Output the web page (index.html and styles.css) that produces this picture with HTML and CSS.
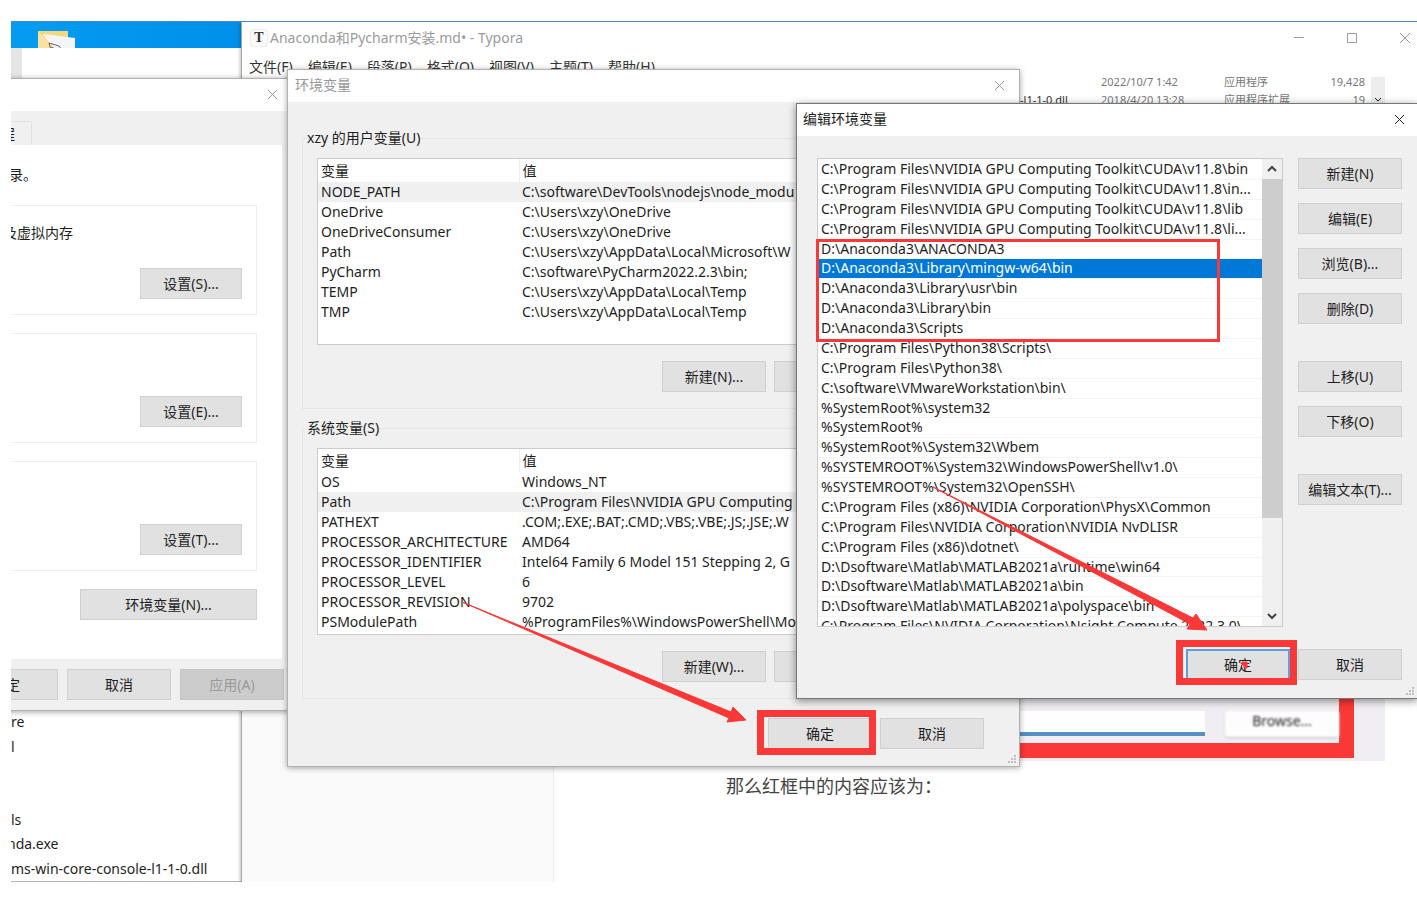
FILE: index.html
```html
<!DOCTYPE html>
<html lang="zh-CN">
<head>
<meta charset="utf-8">
<title>环境变量</title>
<link rel="stylesheet" href="styles.css">
</head>
<body>
<main class="desktop">
  <svg class="folder" width="38" height="20" viewBox="0 0 38 20" aria-hidden="true">
    <path class="folder-back" d="M0 1H30V20H0Z"/>
    <path class="folder-paper" d="M5 4L37 8V20H14Z"/>
    <path class="folder-front" d="M0 2L14 14V20H0Z"/>
    <path class="folder-lines" d="M11 13L13 20M11 13L21 16L24 20M13 17L20 20"/>
  </svg>

  <section class="explorer">
    <ul class="files">
      <li>re</li>
      <li>l</li>
      <li></li>
      <li></li>
      <li>ls</li>
      <li class="cut">nda.exe</li>
      <li>ms-win-core-console-l1-1-0.dll</li>
    </ul>
  </section>

  <section class="typora">
    <header class="typora-bar">
      <span class="logo">T</span>
      <h1 class="typora-title">Anaconda和Pycharm安装.md• - Typora</h1>
      <div class="caption">
        <button type="button" aria-label="最小化"><svg width="12" height="12"><path d="M1 5.500H11" /></svg></button>
        <button type="button" aria-label="最大化"><svg width="12" height="12"><path d="M1.500 1.500H10.500V10.500H1.500Z" /></svg></button>
        <button type="button" aria-label="关闭"><svg width="12" height="12"><path d="M1 1L11 11M11 1L1 11" /></svg></button>
      </div>
    </header>
    <nav class="menu">
      <a href="#">文件(F)</a><a href="#">编辑(E)</a><a href="#">段落(P)</a><a href="#">格式(O)</a><a href="#">视图(V)</a><a href="#">主题(T)</a><a href="#">帮助(H)</a>
    </nav>
    <div class="typora-body">
      <aside class="sidebar"></aside>
      <article class="document">
        <div class="shot-top">
          <table class="details">
            <tr><td class="name"></td><td class="date">2022/10/7 1:42</td><td>应用程序</td><td class="size">19,428</td></tr>
            <tr><td class="name">-l1-1-0.dll</td><td>2018/4/20 13:28</td><td>应用程序扩展</td><td class="size">19</td></tr>
          </table>
          <div class="shot-scroll"><svg width="8" height="6"><path d="M1 1L4 4L7 1" /></svg></div>
        </div>
        <div class="shot-bottom">
          <div class="shot-field"></div>
          <div class="shot-browse">Browse...</div>
        </div>
        <p class="caption-text">那么红框中的内容应该为：</p>
      </article>
    </div>
  </section>

  <section class="window props">
    <header class="titlebar">
      <button class="close" type="button" aria-label="关闭"><svg width="11" height="11"><path d="M1 1L10 10M10 1L1 10" /></svg></button>
    </header>
    <div class="tabs"><span class="tab">程</span></div>
    <div class="page">
      <p class="note">录。</p>
      <div class="box"><p>及虚拟内存</p><button class="btn" type="button">设置(S)...</button></div>
      <div class="box"><button class="btn" type="button">设置(E)...</button></div>
      <div class="box"><button class="btn" type="button">设置(T)...</button></div>
      <button class="btn wide" type="button">环境变量(N)...</button>
    </div>
    <footer class="actions">
      <button class="btn" type="button">确定</button>
      <button class="btn" type="button">取消</button>
      <button class="btn" type="button" disabled>应用(A)</button>
    </footer>
  </section>

  <section class="window env">
    <header class="titlebar">
      <h2>环境变量</h2>
      <button class="close" type="button" aria-label="关闭"><svg width="11" height="11"><path d="M1 1L10 10M10 1L1 10" /></svg></button>
    </header>
    <div class="env-body">
      <fieldset class="group">
        <legend>xzy 的用户变量(U)</legend>
        <div class="list">
          <table class="vars">
            <thead><tr><th>变量</th><th>值</th></tr></thead>
            <tbody>
              <tr class="current"><td>NODE_PATH</td><td>C:\software\DevTools\nodejs\node_modu</td></tr>
              <tr><td>OneDrive</td><td>C:\Users\xzy\OneDrive</td></tr>
              <tr><td>OneDriveConsumer</td><td>C:\Users\xzy\OneDrive</td></tr>
              <tr><td>Path</td><td>C:\Users\xzy\AppData\Local\Microsoft\W</td></tr>
              <tr><td>PyCharm</td><td>C:\software\PyCharm2022.2.3\bin;</td></tr>
              <tr><td>TEMP</td><td>C:\Users\xzy\AppData\Local\Temp</td></tr>
              <tr><td>TMP</td><td>C:\Users\xzy\AppData\Local\Temp</td></tr>
            </tbody>
          </table>
        </div>
        <div class="row"><button class="btn" type="button">新建(N)...</button><button class="btn" type="button" aria-label="编辑"></button><button class="btn" type="button" aria-label="删除"></button></div>
      </fieldset>
      <fieldset class="group">
        <legend>系统变量(S)</legend>
        <div class="list">
          <table class="vars">
            <thead><tr><th>变量</th><th>值</th></tr></thead>
            <tbody>
              <tr><td>OS</td><td>Windows_NT</td></tr>
              <tr class="current"><td>Path</td><td>C:\Program Files\NVIDIA GPU Computing</td></tr>
              <tr><td>PATHEXT</td><td>.COM;.EXE;.BAT;.CMD;.VBS;.VBE;.JS;.JSE;.W</td></tr>
              <tr><td>PROCESSOR_ARCHITECTURE</td><td>AMD64</td></tr>
              <tr><td>PROCESSOR_IDENTIFIER</td><td>Intel64 Family 6 Model 151 Stepping 2, G</td></tr>
              <tr><td>PROCESSOR_LEVEL</td><td>6</td></tr>
              <tr><td>PROCESSOR_REVISION</td><td>9702</td></tr>
              <tr><td>PSModulePath</td><td>%ProgramFiles%\WindowsPowerShell\Mo</td></tr>
            </tbody>
          </table>
        </div>
        <div class="row"><button class="btn" type="button">新建(W)...</button><button class="btn" type="button" aria-label="编辑"></button><button class="btn" type="button" aria-label="删除"></button></div>
      </fieldset>
      <footer class="row confirm"><button class="btn" type="button">确定</button><button class="btn" type="button">取消</button></footer>
    </div>
    <svg class="grip" width="10" height="10" aria-hidden="true"><path d="M7 0h2v2h-2zM4 3h2v2h-2zM7 3h2v2h-2zM1 6h2v2h-2zM4 6h2v2h-2zM7 6h2v2h-2z"/></svg>
  </section>

  <section class="window edit">
    <header class="titlebar">
      <h2>编辑环境变量</h2>
      <button class="close" type="button" aria-label="关闭"><svg width="11" height="11"><path d="M1 1L10 10M10 1L1 10" /></svg></button>
    </header>
    <div class="edit-body">
      <div class="list paths-list">
        <ul class="paths">
          <li>C:\Program Files\NVIDIA GPU Computing Toolkit\CUDA\v11.8\bin</li>
          <li>C:\Program Files\NVIDIA GPU Computing Toolkit\CUDA\v11.8\in...</li>
          <li>C:\Program Files\NVIDIA GPU Computing Toolkit\CUDA\v11.8\lib</li>
          <li>C:\Program Files\NVIDIA GPU Computing Toolkit\CUDA\v11.8\li...</li>
          <li>D:\Anaconda3\ANACONDA3</li>
          <li class="selected">D:\Anaconda3\Library\mingw-w64\bin</li>
          <li>D:\Anaconda3\Library\usr\bin</li>
          <li>D:\Anaconda3\Library\bin</li>
          <li>D:\Anaconda3\Scripts</li>
          <li>C:\Program Files\Python38\Scripts\</li>
          <li>C:\Program Files\Python38\</li>
          <li>C:\software\VMwareWorkstation\bin\</li>
          <li>%SystemRoot%\system32</li>
          <li>%SystemRoot%</li>
          <li>%SystemRoot%\System32\Wbem</li>
          <li>%SYSTEMROOT%\System32\WindowsPowerShell\v1.0\</li>
          <li>%SYSTEMROOT%\System32\OpenSSH\</li>
          <li>C:\Program Files (x86)\NVIDIA Corporation\PhysX\Common</li>
          <li>C:\Program Files\NVIDIA Corporation\NVIDIA NvDLISR</li>
          <li>C:\Program Files (x86)\dotnet\</li>
          <li>D:\Dsoftware\Matlab\MATLAB2021a\runtime\win64</li>
          <li>D:\Dsoftware\Matlab\MATLAB2021a\bin</li>
          <li>D:\Dsoftware\Matlab\MATLAB2021a\polyspace\bin</li>
          <li>C:\Program Files\NVIDIA Corporation\Nsight Compute 2022.3.0\</li>
        </ul>
        <div class="scrollbar">
          <svg width="10" height="7"><path d="M1 6L5 2L9 6" /></svg>
          <span class="thumb"></span>
          <svg width="10" height="7"><path d="M1 1L5 5L9 1" /></svg>
        </div>
      </div>
      <div class="side">
        <button class="btn" type="button">新建(N)</button>
        <button class="btn" type="button">编辑(E)</button>
        <button class="btn" type="button">浏览(B)...</button>
        <button class="btn" type="button">删除(D)</button>
        <button class="btn apart" type="button">上移(U)</button>
        <button class="btn" type="button">下移(O)</button>
        <button class="btn apart" type="button">编辑文本(T)...</button>
      </div>
    </div>
    <footer class="row edit-confirm"><button class="btn default" type="button">确定</button><button class="btn" type="button">取消</button></footer>
    <svg class="grip" width="10" height="10" aria-hidden="true"><path d="M7 0h2v2h-2zM4 3h2v2h-2zM7 3h2v2h-2zM1 6h2v2h-2zM4 6h2v2h-2zM7 6h2v2h-2z"/></svg>
  </section>

  <svg class="marks" aria-hidden="true">
    <g transform="translate(-11 -21)">
      <rect x="817.500" y="240.500" width="401" height="100" stroke-width="3"/>
      <rect x="760.500" y="713.500" width="112" height="38" stroke-width="7"/>
      <rect x="1179.500" y="643.500" width="114" height="38" stroke-width="7"/>
      <path d="M462 602L731 712L733 707L746 720L727 722L729 718Z"/>
      <path d="M933 487L1193 618L1196 614L1207 630L1187 629L1190 624Z"/>
      <path d="M1242 662h5v6h-3v-3h-2z"/>
    </g>
  </svg>
</main>
</body>
</html>
```

FILE: styles.css
```css
* { box-sizing: border-box; }

body {
  margin: 0;
  background: #fff;
  color: #1e1e1e;
  font: 14px/20px "Noto Sans", "Noto Sans CJK SC", sans-serif;
}

h1, h2, p, ul { margin: 0; padding: 0; font-size: 14px; font-weight: 400; }
ul { list-style: none; }
button { font: inherit; color: inherit; padding: 0; border: 0; background: none; }
svg path { fill: none; stroke: currentColor; }

.desktop {
  position: relative;
  height: calc(100vh - 54px);
  min-height: 861px;
  margin: 21px 0 0 11px;
  overflow: hidden;
  background: #fff linear-gradient(90deg, #049cf0, #0090ea 230px) no-repeat 0 0 / 231px 27px;
  border-top: 1px solid #4a86c8;
}

.folder { position: absolute; left: 27px; top: 8px; }
.folder path { stroke: none; }
.folder .folder-back { fill: #f5d77c; }
.folder .folder-paper { fill: #f3f5f8; }
.folder .folder-front { fill: #f9e2a0; }
.folder .folder-lines { stroke: #666; }

/* file explorer */
.explorer {
  position: absolute;
  left: 0;
  top: 26px;
  bottom: 0;
  width: 231px;
  display: flex;
  align-items: flex-end;
  background: linear-gradient(#e6e6e6, #e6e6e6) no-repeat 0 0 / 11px 40px, #fff;
  border-bottom: 1px solid #b4b4b4;
}
.files { height: 171px; display: grid; grid-auto-rows: 1fr; align-items: center; }
.files .cut { margin-left: -4px; }

/* Typora */
.typora {
  position: absolute;
  left: 230px;
  right: 0;
  top: 0;
  bottom: 0;
  display: flex;
  flex-direction: column;
  background: #fff;
  border-left: 1px solid #a8a8a8;
  box-shadow: -1px 1px 3px rgba(0, 0, 0, .25);
}
.typora-bar { display: flex; align-items: center; height: 32px; padding-left: 9px; color: #9b9b9b; }
.logo {
  width: 16px;
  height: 16px;
  margin-right: 3px;
  border-radius: 3px;
  background: #fafafa;
  box-shadow: 0 0 2px #bbb;
  color: #333;
  font: 700 14px/16px "Liberation Serif", serif;
  text-align: center;
}
.caption { display: flex; gap: 41px; margin-left: auto; padding-right: 6px; }
.caption button { display: flex; }
.menu { display: flex; gap: 15px; padding: 3px 7px 0; color: #333; }
.menu a { color: inherit; text-decoration: none; }
.typora-body { flex: 1; display: flex; }
.sidebar { width: 312px; background: #fafafa; border-right: 1px solid #eee; }
.document { flex: 1; display: flex; flex-direction: column; padding-right: 32px; }
.shot-top { display: flex; align-items: flex-start; height: 40px; margin-left: 464px; overflow: hidden; }
.details {
  flex: 1;
  table-layout: fixed;
  width: 100%;
  margin-top: -4px;
  border-collapse: collapse;
  font-size: 11px;
  line-height: 18px;
  color: #777;
}
.details td { padding: 0; height: 18px; white-space: nowrap; }
.details .name { width: 83px; padding-left: 2px; color: #333; }
.details .date { width: 123px; }
.details .size { width: 50px; text-align: right; }
.shot-scroll { width: 14px; height: 40px; margin-left: 6px; background: #ededed; padding: 20px 3px 0; line-height: 0; }
.shot-bottom {
  display: flex;
  align-items: flex-start;
  height: 64px;
  margin: 580px 0 0 464px;
  padding: 14px 0 0;
  background: linear-gradient(#fb3838, #fb3838) no-repeat 0 46px / 336px 15px,
    linear-gradient(#fb3838, #fb3838) no-repeat 321px 0 / 15px 60px, #f0eef2;
}
.shot-field { width: 187px; height: 25px; background: #fff; border-bottom: 4px solid #558fc4; }
.shot-browse {
  width: 114px;
  height: 26px;
  margin-left: 20px;
  border-radius: 3px;
  background: #fdfdfd;
  box-shadow: 0 1px 2px #bbb;
  line-height: 20px;
  text-align: center;
  filter: blur(1px);
}
.caption-text { margin: 12px 0 0 172px; font-size: 18px; line-height: 26px; color: #444; }

/* dialog windows */
.window {
  position: absolute;
  background: #f0f0f0;
  border: 1px solid #b0b0b0;
  box-shadow: 0 1px 6px rgba(0, 0, 0, .35);
}
.titlebar {
  display: flex;
  align-items: center;
  height: 32px;
  padding: 0 14px 2px 7px;
  background: #fff;
  color: #999;
}
.close { display: flex; margin-left: auto; }
.btn {
  width: 104px;
  height: 31px;
  flex: none;
  background: #e1e1e1;
  border: 1px solid #d0d0d0;
  text-align: center;
  white-space: nowrap;
}
.btn:disabled { background: #ccc; border-color: #c6c6c6; color: #999; }
.btn.default { border: 2px solid #5aa2dc; }
.row { display: flex; justify-content: flex-end; gap: 8px; }
.grip { position: absolute; right: 2px; bottom: 1px; }
.grip path { fill: #bfbfbf; stroke: none; }
.list { background: #fff; border: 1px solid #c8cccf; overflow: hidden; }

/* system properties */
.props { left: -120px; top: 56px; width: 400px; }
.props .titlebar { padding-right: 12px; }
.tabs { display: flex; height: 34px; padding: 10px 0 0 99px; }
.tab {
  width: 41px;
  padding-right: 16px;
  border: 1px solid #e2e2e2;
  border-bottom: 0;
  line-height: 24px;
  text-align: right;
}
.page {
  display: flex;
  flex-direction: column;
  gap: 18px;
  height: 514px;
  width: 390px;
  padding: 20px 25px 0 0;
  background: #fff;
}
.note { padding-left: 117px; }
.box {
  display: flex;
  flex-direction: column;
  height: 110px;
  padding: 17px 14px 15px 110px;
  margin-left: -8px;
  border: 1px solid #eee;
}
.box p { padding-left: 8px; }
.box .btn { width: 102px; margin: auto 0 0 auto; }
.note + .box { margin-top: 2px; }
.wide { width: 177px; align-self: flex-end; }
.actions { display: flex; justify-content: flex-end; gap: 9px; padding: 10px 6px; }

/* environment variables */
.env { left: 276px; top: 47px; width: 733px; }
.env-body { padding: 26px 14px 17px; }
.group { min-width: 0; height: 281px; margin: 0 0 9px; padding: 10px 14px 0; border: 1px solid #e6e6e6; }
.group legend { margin-left: -10px; padding: 0; }
.group .list { height: 187px; margin-bottom: 16px; }
.vars { width: 100%; table-layout: fixed; border-collapse: collapse; white-space: nowrap; }
.vars th, .vars td { height: 20px; padding: 0 3px; text-align: left; font-weight: 400; }
.vars th { height: 23px; }
.vars th:first-child { width: 201px; border-right: 1px solid #eee; }
.current { background: #f0f0f0; }
.confirm { padding: 10px 21px 0 0; }

/* edit dialog */
.edit { left: 785px; top: 81px; width: 622px; border-color: #777; box-shadow: 0 2px 8px rgba(0, 0, 0, .45); }
.edit .titlebar { color: #1e1e1e; padding: 0 12px 2px 6px; }
.edit-body { display: flex; gap: 15px; padding: 22px 0 0 20px; }
.paths-list { display: flex; width: 466px; height: 469px; }
.paths { flex: 1; height: 478px; padding-top: 1px; display: grid; grid-auto-rows: 1fr; }
.paths li { padding-left: 3px; white-space: nowrap; line-height: 18px; border-bottom: 1px solid #f4f4f4; }
.paths .selected { background: #0078d7; color: #fff; }
.scrollbar { width: 20px; display: flex; flex-direction: column; align-items: center; padding: 6px 0; background: #f0f0f0; }
.scrollbar path { stroke: #444; stroke-width: 2px; }
.thumb { width: 20px; height: 339px; margin: 7px 0 auto; background: #cdcdcd; }
.side { display: flex; flex-direction: column; gap: 14px; }
.side .apart { margin-top: 23px; }
.edit-confirm { padding: 22px 15px 18px 0; }

/* red annotations */
.marks { position: absolute; left: 0; top: -1px; width: 100%; height: 100%; pointer-events: none; }
.marks rect { fill: none; stroke: #fb3838; }
.marks path { fill: #fb3838; stroke: #fb3838; stroke-linejoin: round; }
```
